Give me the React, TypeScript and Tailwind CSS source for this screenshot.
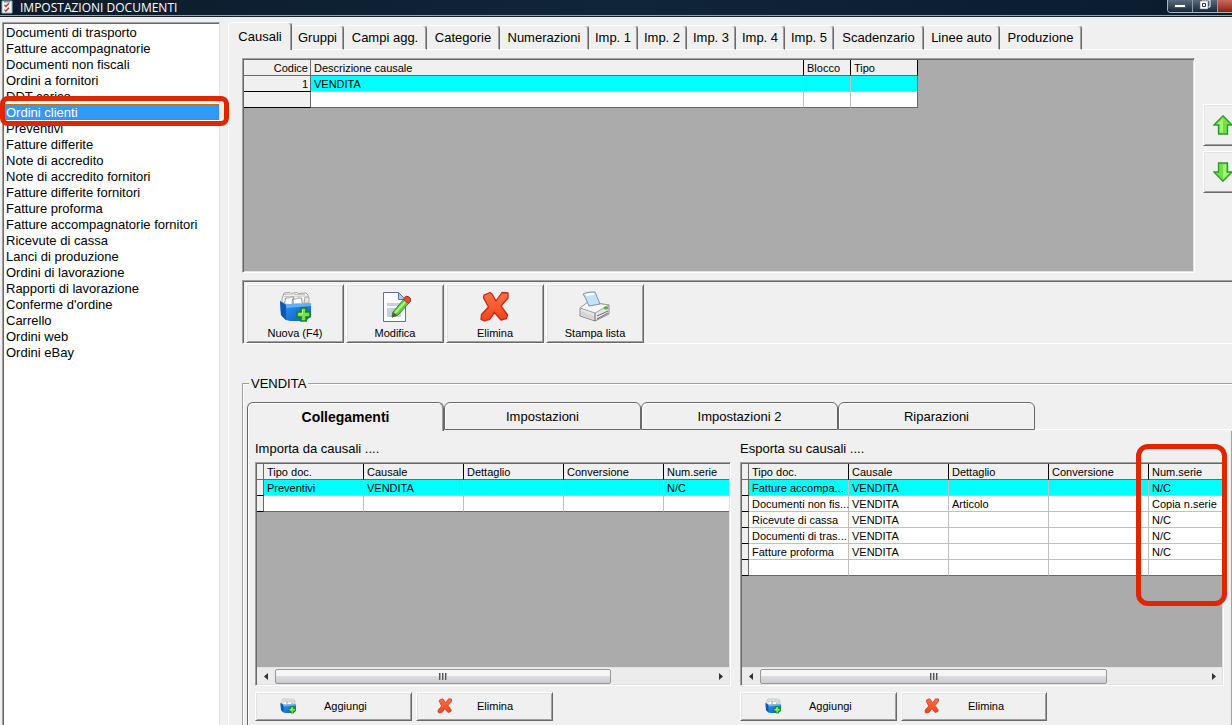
import React, { useState } from 'react'
import clsx from 'clsx'

const documenti = [
  'Documenti di trasporto',
  'Fatture accompagnatorie',
  'Documenti non fiscali',
  'Ordini a fornitori',
  'DDT carico',
  'Ordini clienti',
  'Preventivi',
  'Fatture differite',
  'Note di accredito',
  'Note di accredito fornitori',
  'Fatture differite fornitori',
  'Fatture proforma',
  'Fatture accompagnatorie fornitori',
  'Ricevute di cassa',
  'Lanci di produzione',
  'Ordini di lavorazione',
  'Rapporti di lavorazione',
  "Conferme d'ordine",
  'Carrello',
  'Ordini web',
  'Ordini eBay',
]

const mainTabs = [
  { label: 'Causali', width: 'w-[63px]' },
  { label: 'Gruppi', width: 'w-[52px]' },
  { label: 'Campi agg.', width: 'w-[83px]' },
  { label: 'Categorie', width: 'w-[73px]' },
  { label: 'Numerazioni', width: 'w-[89px]' },
  { label: 'Imp. 1', width: 'w-[49px]' },
  { label: 'Imp. 2', width: 'w-[49px]' },
  { label: 'Imp. 3', width: 'w-[49px]' },
  { label: 'Imp. 4', width: 'w-[49px]' },
  { label: 'Imp. 5', width: 'w-[49px]' },
  { label: 'Scadenzario', width: 'w-[90px]' },
  { label: 'Linee auto', width: 'w-[76px]' },
  { label: 'Produzione', width: 'w-[82px]' },
]

const subTabs = ['Collegamenti', 'Impostazioni', 'Impostazioni 2', 'Riparazioni']

const linkColumns = ['Tipo doc.', 'Causale', 'Dettaglio', 'Conversione', 'Num.serie']

const importRows = [
  ['Preventivi', 'VENDITA', '', '', 'N/C'],
  ['', '', '', '', ''],
]

const exportRows = [
  ['Fatture accompa...', 'VENDITA', '', '', 'N/C'],
  ['Documenti non fis...', 'VENDITA', 'Articolo', '', 'Copia n.serie'],
  ['Ricevute di cassa', 'VENDITA', '', '', 'N/C'],
  ['Documenti di tras...', 'VENDITA', '', '', 'N/C'],
  ['Fatture proforma', 'VENDITA', '', '', 'N/C'],
  ['', '', '', '', ''],
]

// classic 3D edges
const raised =
  'border border-t-white border-l-white border-r-[#696969] border-b-[#696969] shadow-[inset_1px_1px_0_#e3e3e3,inset_-1px_-1px_0_#a0a0a0]'
const sunken =
  'border border-t-[#a0a0a0] border-l-[#a0a0a0] border-r-white border-b-white p-px shadow-[inset_1px_1px_0_#696969,inset_-1px_-1px_0_#e3e3e3]'

const gridTable =
  'table-fixed border-separate border-spacing-0 text-[11px] leading-[13px] whitespace-nowrap [&_td]:pt-0.5 [&_th]:pt-0.5'

function AppIcon() {
  return (
    <svg viewBox="0 0 12 14" className="h-3.5 w-3">
      <path d="M1 1h10v12H1z" fill="#eef4f4" stroke="#8fb9bb" />
      <path d="M3 1h6v1.5H3z" fill="#7f9ea3" />
      <path d="M3.5 5l1.3 1.5L8 3.2M3.5 9.6l1.3 1.5L8 7.8" fill="none" stroke="#c93434" strokeWidth="1.4" />
    </svg>
  )
}

function BoxAddIcon({ className }: { className: string }) {
  return (
    <svg viewBox="0 0 32 32" className={className}>
      <defs>
        <linearGradient id="boxFront" x1="0" y1="0" x2="1" y2="1">
          <stop offset="0" stopColor="#2f9bf5" />
          <stop offset="1" stopColor="#0a5fc4" />
        </linearGradient>
      </defs>
      <path d="M3 12V8l2-6 6-.5 1 1 6-1 1 1 8-.5 2 2v9z" fill="#f6f6f6" stroke="#a0a0a0" />
      <path d="M5 3.500l9-.5M15 3.500h11M5 5.500l22-.5" fill="none" stroke="#c4c4c4" />
      <path d="M5.500 13l1-6h4l1-1h3l-.5 8zM13 13l.5-5h4l1-1h4l1 6z" fill="#fff" stroke="#9a9a9a" />
      <path d="M25 12l1-6h4v6z" fill="#e7e7e7" stroke="#a6a6a6" />
      <path d="M1 10l6 4h25v11l-5 5H11l-4-1-5-5z" fill="url(#boxFront)" />
      <path d="M1 10l6 4v15l-5-5z" fill="#0b58b5" />
      <path d="M7 13.500l25-1.500v3L7 17z" fill="#5db2f9" />
      <path d="M22 17h5v4h4v5h-4v4h-5v-4h-4v-5h4z" fill="#7be14b" stroke="#12851a" strokeWidth="1.600" />
      <path d="M23.500 19v4H20" fill="none" stroke="#c5f9a6" />
    </svg>
  )
}

function EditIcon() {
  return (
    <svg viewBox="0 0 32 32" className="size-8">
      <path d="M4.500 1.500h15l7 7v22h-22z" fill="#fdfdff" stroke="#5f7299" />
      <path d="M19.500 1.500v7h7z" fill="#aecbf0" stroke="#5f7299" />
      <path d="M8 12h14v3H8zM8 17h14v9H8z" fill="#c9cfe2" />
      <path d="M13 26l1-5L25 8l5 4-11 12z" fill="#66cf3a" stroke="#2d8c1e" />
      <path d="M16 22L27 10" stroke="#b0f38a" strokeWidth="2" />
      <path d="M13 26.500l1-5.500 4.500 3.500z" fill="#5a5a3c" />
      <path d="M24.500 8.500l1.500-2.500c2-2 7 1 5.500 4l-2 2.500z" fill="#e04e38" stroke="#a9291b" />
    </svg>
  )
}

function DeleteIcon({ className }: { className: string }) {
  return (
    <svg viewBox="0 0 32 32" className={className}>
      <defs>
        <linearGradient id="crossFill" x1="0" y1="0" x2="0" y2="1">
          <stop offset="0" stopColor="#ff7046" />
          <stop offset="1" stopColor="#f0441c" />
        </linearGradient>
      </defs>
      <path
        d="M5 4l6-2.500 2 1.500 4 7 6-8.500 6 .5v5l-7 8 6.500 9-1 3.500-5.500 1.500-6.500-7.500-5 7-5 1.500-3.500-1.500.5-5 7-7.500L4.500 7z"
        fill="url(#crossFill)"
        stroke="#c42a10"
        strokeWidth="1.300"
        strokeLinejoin="round"
      />
    </svg>
  )
}

function PrinterIcon() {
  return (
    <svg viewBox="0 0 32 32" className="size-8">
      <path d="M1 17l8-6 21 3v9l-14 7-15-5z" fill="#e6e6e6" stroke="#8c8c8c" />
      <path d="M1 17l15 5 14-8-21-3z" fill="#f7f7f7" stroke="#a2a2a2" />
      <path d="M4 3c4-2 8-2 12-2l5 12-11 2C8 11 7 7 4 3z" fill="#c6e1fb" stroke="#8094ab" />
      <path d="M7 4c3-1 5-1 8-1" stroke="#fff" strokeWidth="2" fill="none" />
      <path d="M16 22v8M18 25l11-5M18 28l11-6" stroke="#6d6d6d" fill="none" />
      <path d="M2 20l13 5v4L2 24z" fill="#d5d5d5" />
      <ellipse cx="27" cy="17" rx="2" ry="1.300" fill="#4bd332" stroke="#259a1c" strokeWidth=".5" />
    </svg>
  )
}

function ArrowIcon({ down = false }: { down?: boolean }) {
  return (
    <svg viewBox="0 0 20 20" className={clsx('h-5 w-5 shrink-0', down && 'rotate-180')}>
      <path d="M10 .8l9 9.200h-4.500v9H5.500v-9H1z" fill="#6fe23c" stroke="#2c9a2c" strokeWidth="1.300" />
      <path d="M10 3L4 9h3v8.500h3z" fill="#a5f47a" />
    </svg>
  )
}

function TitleBar() {
  return (
    <header className="flex h-[17px] shrink-0 items-start justify-between border-b border-[#14202b] bg-linear-to-r from-[#0c1c2b] via-[#10243a] to-[#0a1b2e] shadow-[inset_0_-1px_0_#8ea3ad]">
      <div className="flex items-start gap-[7px] pl-px">
        <AppIcon />
        <h1 className="font-['Open_Sans',sans-serif] text-[12px] leading-4 text-white">IMPOSTAZIONI DOCUMENTI</h1>
      </div>
      <div className="flex h-[13px] overflow-hidden rounded-bl border-b border-l border-[#a9b6c2]">
        <button aria-label="Riduci a icona" className="flex w-[25px] items-end justify-center border-r border-[#8d9bab] bg-linear-to-b from-[#5c6b7c] to-[#17283b] pb-1">
          <span className="h-[4px] w-[12px] border border-[#555] bg-white" />
        </button>
        <button aria-label="Ripristina" className="flex w-[25px] items-start justify-center border-r border-[#8d9bab] bg-linear-to-b from-[#5c6b7c] to-[#17283b]">
          <svg viewBox="0 0 12 10" className="h-2.5 w-3">
            <path d="M3 0h8v7H9" fill="none" stroke="#fff" />
            <path d="M1 1h8v8H1z" fill="#fff" stroke="#667" strokeWidth=".5" />
            <path d="M3.500 3.500h3v3h-3z" fill="#fff" stroke="#26384a" />
          </svg>
        </button>
        <button aria-label="Chiudi" className="w-3.5 bg-linear-to-b from-[#c86a5c] to-[#8e1c10]" />
      </div>
    </header>
  )
}

function DocumentList() {
  const [selected, setSelected] = useState('Ordini clienti')

  return (
    <ul className="mt-[5px] ml-[2px] w-[218px] shrink-0 border-t border-r border-l border-t-[#a0a0a0] border-r-[#e3e3e3] border-l-[#a0a0a0] bg-white pt-px pl-px shadow-[inset_1px_1px_0_#696969]">
      {documenti.map((doc) => (
        <li key={doc} className="relative h-4">
          <button
            onClick={() => setSelected(doc)}
            className={clsx(
              'block h-4 w-full pl-[2px] text-left text-[13px] leading-[18px] whitespace-nowrap',
              selected === doc && 'bg-[#3399ff] text-white outline-1 -outline-offset-1 outline-[#cc6600] outline-dotted'
            )}
          >
            {doc}
          </button>
          {doc === 'Ordini clienti' && (
            <div className="pointer-events-none absolute -top-2 -right-2.5 -bottom-1.5 -left-1 z-10 rounded-lg border-[5px] border-[#e32400]" />
          )}
        </li>
      ))}
    </ul>
  )
}

function CausaliTable() {
  return (
    <table className={clsx('w-[674px]', gridTable)}>
      <colgroup>
        <col className="w-[67px]" />
        <col className="w-[493px]" />
        <col className="w-[47px]" />
        <col className="w-[67px]" />
      </colgroup>
      <thead>
        <tr className="h-4 bg-[#f0f0f0] text-left">
          <th className="border-r border-b border-[#696969] p-0 pr-0.5 text-right font-normal">Codice</th>
          <th className="border-r border-b border-r-black border-b-[#696969] p-0 pl-[3px] font-normal">Descrizione causale</th>
          <th className="border-r border-b border-r-black border-b-[#696969] p-0 pl-[3px] font-normal">Blocco</th>
          <th className="border-r border-b border-r-black border-b-[#696969] p-0 pl-[3px] font-normal">Tipo</th>
        </tr>
      </thead>
      <tbody>
        <tr className="h-4 bg-[#00ffff]">
          <td className="border-r border-b border-r-[#696969] border-b-black bg-[#f0f0f0] p-0 pr-0.5 text-right">1</td>
          <td className="border-r border-b border-[#c0c0c0] p-0 pl-[3px]">VENDITA</td>
          <td className="border-r border-b border-[#c0c0c0] p-0" />
          <td className="border-r border-b border-r-[#696969] border-b-[#c0c0c0] p-0" />
        </tr>
        <tr className="h-4 bg-white">
          <td className="border-r border-b border-r-[#696969] border-b-black bg-[#f0f0f0] p-0" />
          <td className="border-r border-b border-r-[#c0c0c0] border-b-[#696969] p-0" />
          <td className="border-r border-b border-r-[#c0c0c0] border-b-[#696969] p-0" />
          <td className="border-r border-b border-[#696969] p-0" />
        </tr>
      </tbody>
    </table>
  )
}

function HorizontalScrollbar({ thumb }: { thumb: string }) {
  return (
    <div className="flex h-[17px] shrink-0 items-center border-t border-[#e3e3e3] bg-[#ececec]">
      <button aria-label="Scorri a sinistra" className="flex w-[18px] justify-center">
        <svg viewBox="0 0 4 7" className="h-[7px] w-1"><path d="M4 0v7L0 3.500z" fill="#333" /></svg>
      </button>
      <div className="h-[15px] flex-1">
        <div
          className={clsx(
            'flex h-[15px] items-center justify-center gap-px rounded-xs border border-[#979797] bg-linear-to-b from-[#f5f5f5] from-50% via-[#dcdde0] via-50% to-[#cbccd0]',
            thumb
          )}
        >
          <span className="h-[7px] w-[2px] border-l border-[#555] bg-[#aaa]" />
          <span className="h-[7px] w-[2px] border-l border-[#555] bg-[#aaa]" />
          <span className="h-[7px] w-[2px] border-l border-[#555] bg-[#aaa]" />
        </div>
      </div>
      <button aria-label="Scorri a destra" className="flex w-[17px] justify-center">
        <svg viewBox="0 0 4 7" className="h-[7px] w-1"><path d="M0 0v7l4-3.500z" fill="#333" /></svg>
      </button>
    </div>
  )
}

function LinkGrid({ rows, thumb }: { rows: string[][]; thumb: string }) {
  return (
    <div className={clsx('flex h-56 flex-col bg-[#ababab]', sunken)}>
      <div className="min-h-0 flex-1 overflow-hidden">
        <table className={clsx('w-[507px]', gridTable)}>
          <colgroup>
            <col className="w-[7px]" />
            {linkColumns.map((col) => (
              <col key={col} className="w-[100px]" />
            ))}
          </colgroup>
          <thead>
            <tr className="h-4 bg-[#f0f0f0] text-left">
              <th className="border-r border-b border-[#696969] p-0" />
              {linkColumns.map((col) => (
                <th key={col} className="border-r border-b border-r-black border-b-[#696969] p-0 pl-[3px] font-normal">
                  {col}
                </th>
              ))}
            </tr>
          </thead>
          <tbody>
            {rows.map((row, i) => (
              <tr key={i} className={clsx('h-4', i === 0 ? 'bg-[#00ffff]' : 'bg-white')}>
                <td className="border-r border-b border-r-[#696969] border-b-black bg-[#f0f0f0] p-0" />
                {row.map((cell, j) => (
                  <td
                    key={j}
                    className={clsx(
                      'border-r border-b border-r-[#c0c0c0] p-0 pl-[3px]',
                      i === rows.length - 1 ? 'border-b-[#696969]' : 'border-b-[#c0c0c0]'
                    )}
                  >
                    {cell}
                  </td>
                ))}
              </tr>
            ))}
          </tbody>
        </table>
      </div>
      <HorizontalScrollbar thumb={thumb} />
    </div>
  )
}

function ToolButton({ icon, label }: { icon: React.ReactNode; label: string }) {
  return (
    <button className={clsx('flex h-[59px] w-[98px] flex-col items-center pt-1.5 text-[11px]', raised)}>
      {icon}
      <span className="mt-0.5 leading-4">{label}</span>
    </button>
  )
}

function LinkActions({ wide = false }: { wide?: boolean }) {
  return (
    <div className="mt-1.5 flex gap-1 text-[11px]">
      <button className={clsx('flex h-[29px] w-[157px] items-center pl-6', raised)}>
        <BoxAddIcon className="mb-0.5 size-4" />
        <span className="ml-7">Aggiungi</span>
      </button>
      <button className={clsx('flex h-[29px] items-center', wide ? 'w-[146px] pl-[22px]' : 'w-[137px] pl-5', raised)}>
        <DeleteIcon className="mb-0.5 size-4" />
        <span className={wide ? 'ml-7' : 'ml-6'}>Elimina</span>
      </button>
    </div>
  )
}

export default function App() {
  const [tab, setTab] = useState('Causali')
  const [subTab, setSubTab] = useState('Collegamenti')

  return (
    <div className="flex h-screen flex-col overflow-hidden bg-[#f0f0f0] font-['Liberation_Sans',Arial,sans-serif] text-black">
      <TitleBar />
      <div className="flex min-h-0 flex-1">
        <DocumentList />

        <main className="mt-[5px] ml-2 flex min-w-0 flex-1 flex-col rounded-tl-sm border-l border-white">
          {/* Main tabs */}
          <nav className="flex h-7 shrink-0 items-end">
            {mainTabs.map(({ label, width }) => (
              <button
                key={label}
                onClick={() => setTab(label)}
                className={clsx(
                  'shrink-0 rounded-t-sm border-t border-r border-t-white border-r-[#696969] text-[13px] whitespace-nowrap shadow-[inset_-1px_0_0_#a0a0a0]',
                  width,
                  tab === label ? 'h-7' : 'h-[25px] border-b border-b-white'
                )}
              >
                {label}
              </button>
            ))}
            <div className="h-px flex-1 bg-white" />
          </nav>

          {/* Causali grid + move buttons */}
          <div className="mt-2 flex shrink-0 gap-2 pl-[13px]">
            <div className={clsx('h-[215px] min-w-0 flex-1 overflow-hidden bg-[#ababab]', sunken)}>
              <CausaliTable />
            </div>
            <div className="flex w-[29px] shrink-0 flex-col gap-[5px] overflow-hidden pt-[46px]">
              <button aria-label="Sposta su" className={clsx('flex h-[42px] w-10 items-center justify-center', raised)}>
                <ArrowIcon />
              </button>
              <button aria-label="Sposta giù" className={clsx('flex h-[42px] w-10 items-center justify-center', raised)}>
                <ArrowIcon down />
              </button>
            </div>
          </div>

          {/* Toolbar */}
          <div className="mt-[7px] ml-[13px] flex shrink-0 gap-0.5 border-t border-b border-l border-t-[#a0a0a0] border-b-white border-l-[#a0a0a0] pt-[3px] pl-[3px] shadow-[inset_1px_1px_0_#696969]">
            <ToolButton icon={<BoxAddIcon className="size-8" />} label="Nuova (F4)" />
            <ToolButton icon={<EditIcon />} label="Modifica" />
            <ToolButton icon={<DeleteIcon className="size-8" />} label="Elimina" />
            <ToolButton icon={<PrinterIcon />} label="Stampa lista" />
          </div>

          <fieldset className="mt-[31px] ml-[13px] flex min-h-0 min-w-0 flex-1 flex-col border-t border-l border-[#a0a0a0] pl-1 shadow-[inset_1px_1px_0_#fff]">
            <legend className="ml-0.5 bg-[#f0f0f0] px-0.5 pt-0.5 text-[13px] leading-[14px]">VENDITA</legend>

            <nav className="mt-[11px] flex h-[29px] shrink-0">
              {subTabs.map((label) => (
                <button
                  key={label}
                  onClick={() => setSubTab(label)}
                  className={clsx(
                    'w-[197px] shrink-0 rounded-t-md border-t border-r border-l border-[#696969]',
                    subTab === label
                      ? 'text-[14px] font-bold shadow-[inset_1px_1px_0_#fff,inset_-1px_0_0_#a0a0a0]'
                      : 'h-7 border-b pt-0.5 text-[13px] shadow-[inset_1px_1px_0_#fff]'
                  )}
                >
                  {label}
                </button>
              ))}
              <div className="mb-px flex-1 border-b border-white" />
            </nav>

            <div className="grid min-h-0 flex-1 grid-cols-[minmax(0,476fr)_minmax(0,484fr)] content-start gap-x-[9px] border-r border-l border-r-[#a0a0a0] border-l-[#696969] pt-[9px] pr-[7px] pl-[7px] shadow-[inset_1px_0_0_#fff]">
              <section>
                <h2 className="mb-1 text-[13px] leading-[18px]">Importa da causali ....</h2>
                <LinkGrid rows={importRows} thumb="w-[77%]" />
                <LinkActions />
              </section>
              <section>
                <h2 className="mb-1 text-[13px] leading-[18px]">Esporta su causali ....</h2>
                <div className="relative">
                  <LinkGrid rows={exportRows} thumb="w-[78%]" />
                  <div className="pointer-events-none absolute -top-[18px] -right-[3px] h-[162px] w-[91px] rounded-xl border-[5px] border-[#e32400]" />
                </div>
                <LinkActions wide />
              </section>
            </div>
          </fieldset>
        </main>
      </div>
    </div>
  )
}
